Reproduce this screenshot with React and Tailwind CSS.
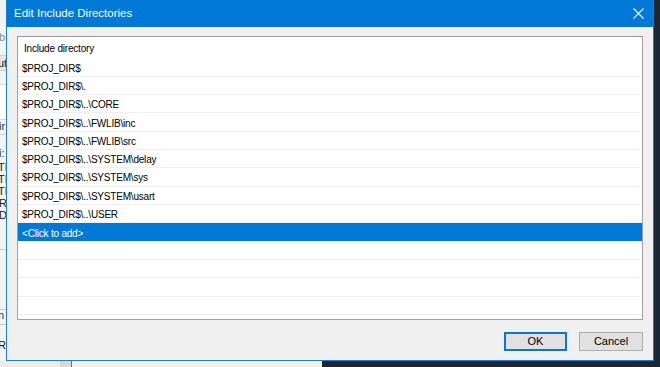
import React from "react";

const rows = [
  "$PROJ_DIR$",
  "$PROJ_DIR$\\.",
  "$PROJ_DIR$\\..\\CORE",
  "$PROJ_DIR$\\..\\FWLIB\\inc",
  "$PROJ_DIR$\\..\\FWLIB\\src",
  "$PROJ_DIR$\\..\\SYSTEM\\delay",
  "$PROJ_DIR$\\..\\SYSTEM\\sys",
  "$PROJ_DIR$\\..\\SYSTEM\\usart",
  "$PROJ_DIR$\\..\\USER",
];

function CloseIcon() {
  return (
    <svg width="11" height="11" viewBox="0 0 11 11" className="block">
      <path d="M0.5 0.5 L10.5 10.5 M10.5 0.5 L0.5 10.5" stroke="#ffffff" strokeWidth="1.1" fill="none" />
    </svg>
  );
}

function LeftStrip() {
  return (
    <div className="w-[6px] h-full bg-[#f3f3f3] overflow-hidden flex flex-col text-[11px] leading-none text-[#555] font-['Liberation_Sans',sans-serif] whitespace-nowrap">
      <div className="h-[32px]" />
      <div className="h-[12px] -ml-[1px] text-[#888]">b</div>
      <div className="h-[11px]" />
      <div className="h-[16px] bg-[#e4e4e4] border-y border-[#cfcfcf] -ml-[2px] pt-[2px] text-[#222]">ut</div>
      <div className="h-[13px]" />
      <div className="h-[36px] bg-white border-y border-[#d8d8d8]" />
      <div className="h-[14px] -ml-[1px] pt-[1px] text-[#333]">ir</div>
      <div className="h-[14px] border-t border-[#d0d0d0]" />
      <div className="h-[14px] -ml-[1px] text-[#333]">i:</div>
      <div className="h-[12px] -ml-[2px] text-[#222]">TE</div>
      <div className="h-[12px] -ml-[2px] text-[#222]">TE</div>
      <div className="h-[12px] -ml-[2px] text-[#222]">TE</div>
      <div className="h-[12px] -ml-[1px] text-[#222]">R</div>
      <div className="h-[12px] -ml-[1px] text-[#222]">D</div>
      <div className="h-[28px] border-b border-[#c8c8c8]" />
      <div className="h-[60px] border-b border-[#c8c8c8]" />
      <div className="h-[14px] -ml-[2px] text-[#333]">n</div>
      <div className="h-[16px] border-t border-[#c8c8c8]" />
      <div className="h-[12px] -ml-[2px] text-[#111]">RI</div>
    </div>
  );
}

export default function App() {
  return (
    <div className="w-[660px] h-[367px] overflow-hidden bg-[#1b2735] flex flex-col font-['Liberation_Sans',Arial,sans-serif]">
      <div className="flex h-[361px]">
        <LeftStrip />
        <div className="w-[648px] h-full flex flex-col border-x border-b border-[#1a7fd4] bg-[#f0f0f0]">
          <div className="h-[27px] bg-[#0078d7] flex items-center justify-between pl-[7px] pr-[9px] shrink-0">
            <span className="text-white text-[11.5px] leading-none">Edit Include Directories</span>
            <CloseIcon />
          </div>
          <div className="flex-1 flex flex-col px-[10px] pt-[9px] pb-[9px]">
            <div className="h-[284px] border border-[#a0a0a0] border-t-[#9a9a9a] bg-white overflow-hidden flex flex-col text-[10px] tracking-[-0.2px] text-black leading-none">
              <div className="h-[21.5px] shrink-0 flex items-center pl-[6px] pt-[2px]">Include directory</div>
              {rows.map((r) => (
                <div key={r} className="h-[18.3px] shrink-0 flex items-center pl-[4px] pt-[3px] mr-[2px] border-b border-[#f0f0f0]">
                  {r}
                </div>
              ))}
              <div className="h-[18.3px] shrink-0 flex items-center pl-[4px] pt-[3px] bg-[#0078d7] text-white">
                &lt;Click to add&gt;
              </div>
              {[0, 1, 2, 3].map((i) => (
                <div key={i} className="h-[18.5px] shrink-0 mr-[2px] border-b border-[#f0f0f0]" />
              ))}
            </div>
            <div className="flex justify-end gap-[12px] mt-[12px]">
              <button className="w-[63px] h-[19px] bg-[#e1e1e1] border-2 border-[#0078d7] text-[11px] leading-none text-black flex items-center justify-center">
                OK
              </button>
              <button className="w-[64px] h-[19px] bg-[#e1e1e1] border border-[#adadad] text-[11px] leading-none text-black flex items-center justify-center">
                Cancel
              </button>
            </div>
          </div>
        </div>
        <div className="w-[6px] h-full bg-[#1b2735]" />
      </div>
      <div className="flex h-[6px]">
        <div className="w-[60px] bg-[#ececec]" />
        <div className="w-[11px] bg-[#d9d9d9]" />
        <div className="w-[1px] bg-[#6e6e6e]" />
        <div className="w-[250px] bg-[#f0f0f0]" />
        <div className="flex-1 bg-[#1b2735]" />
      </div>
    </div>
  );
}
